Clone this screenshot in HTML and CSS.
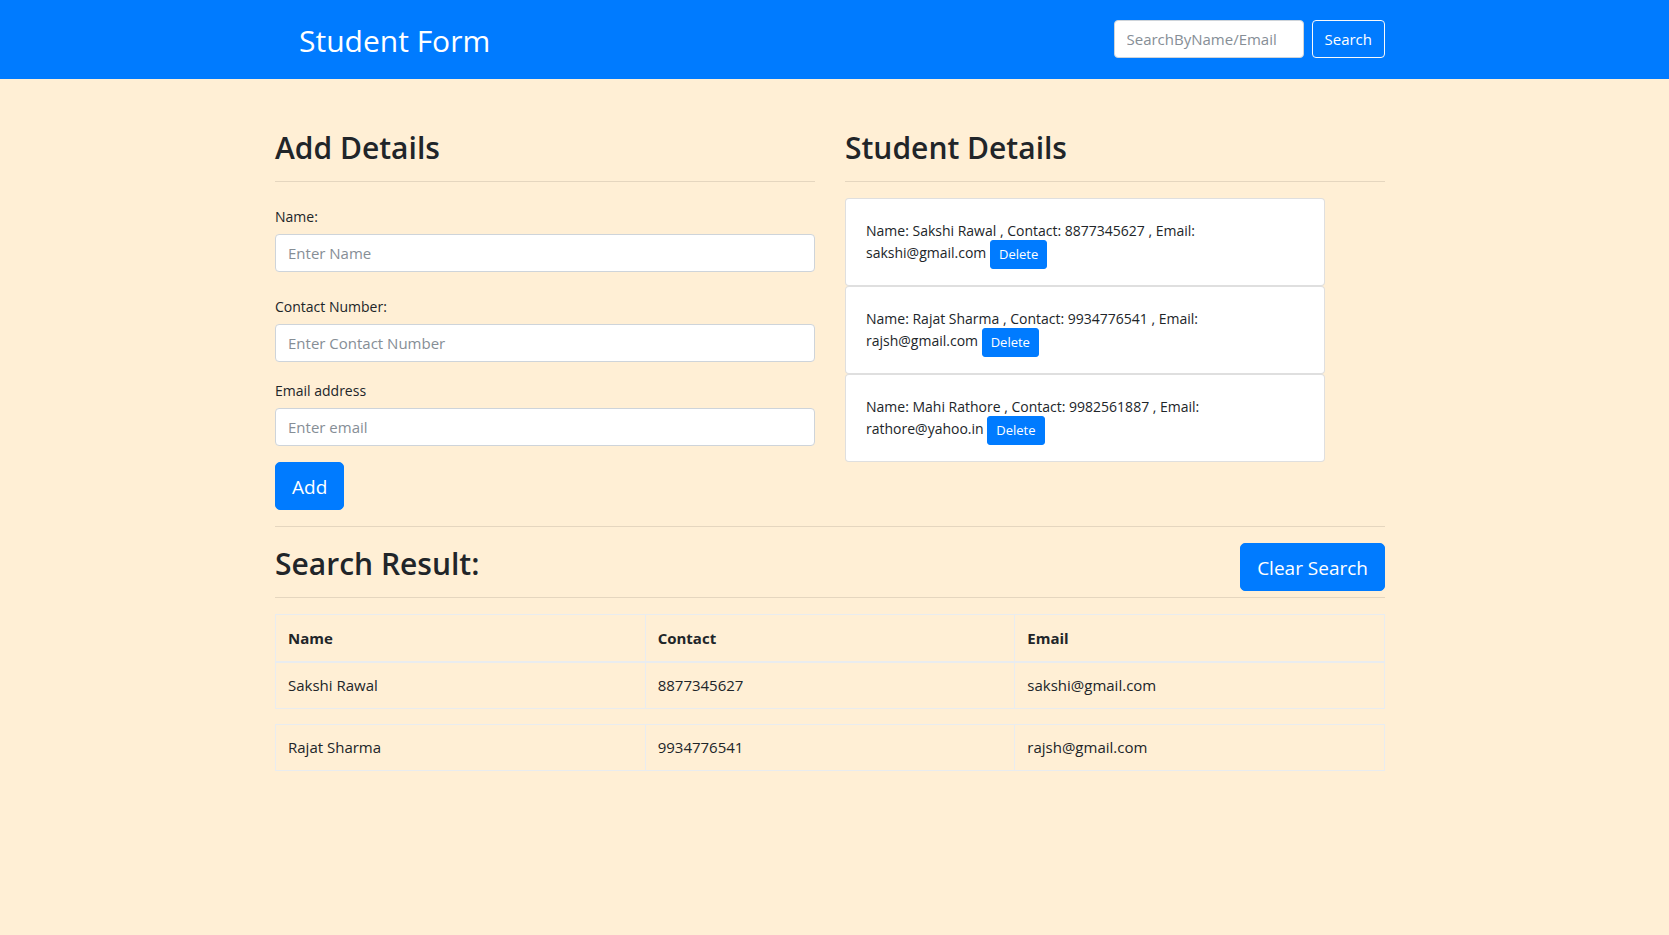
FILE: index.html
```html
<!DOCTYPE html>
<html lang="en">
<head>
<meta charset="utf-8">
<meta name="viewport" content="width=device-width, initial-scale=1">
<title>Student Form</title>
<link rel="stylesheet" href="styles.css">
</head>
<body>
<header class="site-header">
  <div class="container header-row">
    <h1 class="brand">Student Form</h1>
    <form class="search-form">
      <input class="control search-input" type="search" placeholder="SearchByName/Email" aria-label="Search by name or email">
      <button class="btn btn-outline" type="button">Search</button>
    </form>
  </div>
</header>
<main class="container main">
  <div class="columns">
    <section>
      <h2 class="heading">Add Details</h2>
      <hr class="rule">
      <form class="details-form">
        <div class="field field-spaced">
          <label class="label" for="name">Name:</label>
          <input class="control" id="name" type="text" placeholder="Enter Name">
        </div>
        <div class="field field-spaced">
          <label class="label" for="contact">Contact Number:</label>
          <input class="control" id="contact" type="text" placeholder="Enter Contact Number">
        </div>
        <div class="field">
          <label class="label" for="email">Email address</label>
          <input class="control" id="email" type="email" placeholder="Enter email">
        </div>
        <button class="btn btn-primary btn-large" type="button">Add</button>
      </form>
    </section>
    <section>
      <h2 class="heading">Student Details</h2>
      <hr class="rule">
      <ul class="cards">
        <li class="card">Name: Sakshi Rawal , Contact: 8877345627 , Email: sakshi@gmail.com <button class="btn btn-primary btn-small" type="button">Delete</button></li>
        <li class="card">Name: Rajat Sharma , Contact: 9934776541 , Email: rajsh@gmail.com <button class="btn btn-primary btn-small" type="button">Delete</button></li>
        <li class="card">Name: Mahi Rathore , Contact: 9982561887 , Email: rathore@yahoo.in <button class="btn btn-primary btn-small" type="button">Delete</button></li>
      </ul>
    </section>
  </div>
  <hr class="rule">
  <section>
    <div class="result-head">
      <h2 class="heading">Search Result:</h2>
      <button class="btn btn-primary btn-large" type="button">Clear Search</button>
    </div>
    <hr class="rule rule-close">
    <table class="table">
      <thead>
        <tr><th scope="col">Name</th><th scope="col">Contact</th><th scope="col">Email</th></tr>
      </thead>
      <tbody>
        <tr><td>Sakshi Rawal</td><td>8877345627</td><td>sakshi@gmail.com</td></tr>
      </tbody>
    </table>
    <table class="table">
      <tbody>
        <tr><td>Rajat Sharma</td><td>9934776541</td><td>rajsh@gmail.com</td></tr>
      </tbody>
    </table>
  </section>
</main>
</body>
</html>
```
FILE: styles.css
```css
*, *::before, *::after { box-sizing: border-box; }

body {
  margin: 0;
  background: #ffefd5;
  color: #212529;
  font-family: "Segoe UI", "Open Sans", "Noto Sans", sans-serif;
  font-size: 15px;
  line-height: 24px;
}

.site-header,
.main { padding-right: 9px; }

.site-header {
  background: #007bff;
  color: #fff;
}

.container {
  max-width: 1110px;
  margin: 0 auto;
}

.header-row {
  display: flex;
  align-items: center;
  justify-content: space-between;
  padding: 20px 0 21px 24px;
}

.brand {
  margin: 0;
  padding-top: 4px;
  font-size: 30px;
  font-weight: 400;
  line-height: 34px;
}

.search-form {
  display: flex;
  gap: 8px;
}

.main {
  max-width: 1119px;
  padding-top: 48px;
}

.columns {
  display: grid;
  grid-template-columns: 1fr 1fr;
  gap: 30px;
}

.heading {
  margin: 0;
  padding-top: 4px;
  font-size: 30px;
  font-weight: 600;
  line-height: 34px;
}

.rule {
  height: 1px;
  margin: 16px 0;
  border: 0;
  background: rgba(0, 0, 0, 0.1);
}

.field { margin-bottom: 16px; }
.field-spaced { padding-top: 6px; }

.label {
  display: block;
  padding-top: 2px;
  margin-bottom: 6px;
  font-size: 14px;
  line-height: 22px;
}

.control {
  display: block;
  width: 100%;
  height: 38px;
  padding: 6px 12px;
  border: 1px solid #ced4da;
  border-radius: 4px;
  background: #fff;
  color: #495057;
  font: inherit;
}

.control::placeholder {
  color: #868e96;
  opacity: 1;
}

.search-input { width: 190px; }

.btn {
  padding: 6px 12px;
  border: 1px solid transparent;
  border-radius: 4px;
  color: #fff;
  font: inherit;
  white-space: nowrap;
  cursor: pointer;
}

.btn-outline {
  border-color: #f8f9fa;
  background: transparent;
}

.btn-primary {
  border-color: #007bff;
  background: #007bff;
}

.btn-large {
  padding: 9px 16px 7px;
  border-radius: 5px;
  font-size: 19px;
  line-height: 30px;
}

.btn-small {
  padding: 3px 8px;
  border-radius: 3px;
  font-size: 13px;
  line-height: 21px;
  vertical-align: middle;
}

.details-form .btn { display: block; }

.cards {
  max-width: 480px;
  margin: 0;
  padding: 0;
  list-style: none;
}

.card {
  padding: 23px 20px 16px;
  border: 1px solid rgba(0, 0, 0, 0.125);
  border-radius: 4px;
  background: #fff;
  font-size: 14px;
  line-height: 18px;
}

.result-head {
  display: flex;
  align-items: flex-start;
  justify-content: space-between;
}

.rule-close { margin-top: 6px; }

.table {
  width: 100%;
  margin-bottom: 15px;
  border: 1px solid #e9ecef;
  border-collapse: collapse;
  table-layout: fixed;
}

.table th,
.table td {
  padding: 11px 12px;
  border: 1px solid #e9ecef;
  text-align: left;
}

.table td { line-height: 23px; }

.table th { border-bottom-width: 2px; }
```
